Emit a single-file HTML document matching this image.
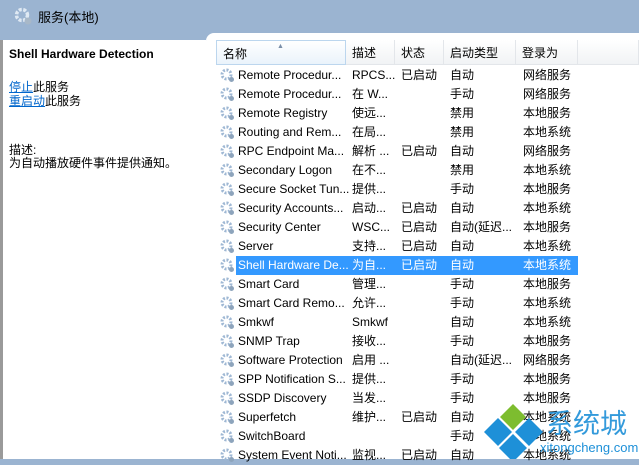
<!DOCTYPE html>
<html><head><meta charset="utf-8"><style>
*{margin:0;padding:0;box-sizing:border-box}
body{width:639px;height:459px;overflow:hidden;background:#9bb4d1;font-family:"Liberation Sans","Noto Sans CJK SC",sans-serif;font-size:12px;color:#000;position:relative}
.abs{position:absolute;white-space:nowrap}
#left{position:absolute;left:0;top:40px;width:206px;height:419px;background:#fff;border-left:3px solid #9a9a9a}
#right{position:absolute;left:206px;top:33px;width:433px;height:426px;background:#fff;border-top-left-radius:8px}
.hdr{position:absolute;top:40px;height:25px;line-height:15px;background:linear-gradient(#fff,#f1f3f5);border-right:1px solid #e3e6ea;border-bottom:1px solid #e3e6ea;padding:6px 0 0 6px}
.row{position:absolute;left:0;height:19px;width:639px}
.row span{position:absolute;top:2px;line-height:15px;height:15px}
.ic{position:absolute;left:220px;top:2px;width:15px;height:15px}
.sel .bg{position:absolute;left:236px;top:0;width:342px;height:19px;background:#3399ff}
.sel span{color:#fff}
a{color:#0066cc}
</style></head><body>
<svg class="abs" style="left:13px;top:6px" width="22" height="22" viewBox="0 0 22 22"><circle cx="9" cy="9" r="5.5" fill="none" stroke="#dfe9f3" stroke-width="3.5" stroke-dasharray="3 1.5"/><circle cx="15" cy="15" r="3.5" fill="#a8b8c8"/></svg>
<div class="abs" style="left:38px;top:9px;font-size:13px;line-height:18px">服务(本地)</div>
<div id="left"></div>
<div id="right"></div>
<div class="abs" style="left:9px;top:47px;font-weight:bold;font-size:12px;line-height:15px">Shell Hardware Detection</div>
<div class="abs" style="left:9px;top:80px;line-height:15px"><a style="text-decoration:underline">停止</a>此服务</div>
<div class="abs" style="left:9px;top:94px;line-height:15px"><a style="text-decoration:underline">重启动</a>此服务</div>
<div class="abs" style="left:9px;top:143px;line-height:15px">描述:</div>
<div class="abs" style="left:9px;top:156px;line-height:15px">为自动播放硬件事件提供通知。</div>
<div class="hdr" style="left:216px;width:130px;background:linear-gradient(#fff,#eaf3fb);border:1px solid #bcd6ee">名称<span style="position:absolute;left:60px;top:-2px;font-size:7px;color:#7a8ea8">▲</span></div>
<div class="hdr" style="left:346px;width:49px">描述</div>
<div class="hdr" style="left:395px;width:49px">状态</div>
<div class="hdr" style="left:444px;width:72px">启动类型</div>
<div class="hdr" style="left:516px;width:62px">登录为</div>
<div class="hdr" style="left:578px;width:61px"></div>
<div id="rows"></div>
<script>
var d=[["Remote Procedur...","RPCS...","已启动","自动","网络服务"],
["Remote Procedur...","在 W...","","手动","网络服务"],
["Remote Registry","使远...","","禁用","本地服务"],
["Routing and Rem...","在局...","","禁用","本地系统"],
["RPC Endpoint Ma...","解析 ...","已启动","自动","网络服务"],
["Secondary Logon","在不...","","禁用","本地系统"],
["Secure Socket Tun...","提供...","","手动","本地服务"],
["Security Accounts...","启动...","已启动","自动","本地系统"],
["Security Center","WSC...","已启动","自动(延迟...","本地服务"],
["Server","支持...","已启动","自动","本地系统"],
["Shell Hardware De...","为自...","已启动","自动","本地系统"],
["Smart Card","管理...","","手动","本地服务"],
["Smart Card Remo...","允许...","","手动","本地系统"],
["Smkwf","Smkwf","","自动","本地系统"],
["SNMP Trap","接收...","","手动","本地服务"],
["Software Protection","启用 ...","","自动(延迟...","网络服务"],
["SPP Notification S...","提供...","","手动","本地服务"],
["SSDP Discovery","当发...","","手动","本地服务"],
["Superfetch","维护...","已启动","自动","本地系统"],
["SwitchBoard","","","手动","本地系统"],
["System Event Noti...","监视...","已启动","自动","本地系统"]];
var x=[238,352,401,450,523],h="";
d.forEach(function(r,i){
h+='<div class="row'+(i==10?' sel':'')+'" style="top:'+(66+i*19)+'px">'+(i==10?'<div class="bg"></div>':'')+
'<svg class="ic" viewBox="0 0 15 15"><circle cx="6.5" cy="6.5" r="4.5" fill="none" stroke="#9fb8d4" stroke-width="3" stroke-dasharray="2 1.5"/><circle cx="6.5" cy="6.5" r="2" fill="#fff"/><circle cx="11.5" cy="11.5" r="2.5" fill="#8da4bc"/></svg>';
r.forEach(function(t,j){h+='<span style="left:'+x[j]+'px">'+t+'</span>'});
h+='</div>';});
document.getElementById('rows').innerHTML=h;
</script>
<svg class="abs" style="left:482px;top:400px" width="70" height="59" viewBox="0 0 70 59">
<polygon points="31,4 44,17 31,30 18,17" fill="#7dbd2f"/>
<polygon points="16,18 30,32 16,46 2,32" fill="#1e90d8"/>
<polygon points="47,18 61,32 47,46 33,32" fill="#1e90d8"/>
<polygon points="31,34 45,48 31,62 17,48" fill="#1e90d8"/>
</svg>
<div class="abs" style="left:546px;top:408px;font-size:27px;line-height:32px;color:#1e90d8;opacity:.9">系统城</div>
<div class="abs" style="left:540px;top:440px;font-size:13px;line-height:15px;color:#1e90d8">xitongcheng.com</div>
</body></html>
